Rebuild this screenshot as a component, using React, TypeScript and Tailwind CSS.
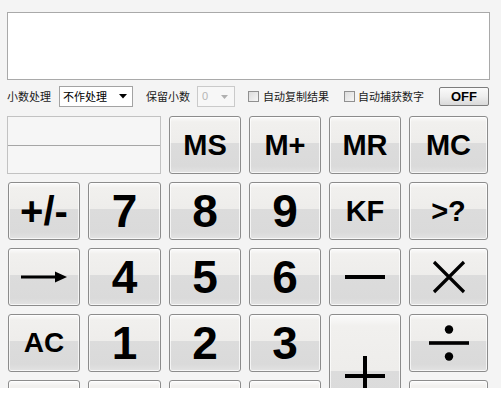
import React from "react";

const btnBase =
  "flex items-center justify-center rounded-[3px] border border-[#8c8c8c] bg-[linear-gradient(to_bottom,#fbfbfb_0%,#f1f0ee_9%,#eeedeb_46%,#dcdcdc_46%,#dadada_88%,#e3e3e3_100%)] shadow-[inset_0_0_0_1px_rgba(255,255,255,0.7)] text-black font-bold font-['Liberation_Sans',Arial,sans-serif] leading-none select-none";

function Btn({
  children,
  className = "",
}: {
  children?: React.ReactNode;
  className?: string;
}) {
  return <div className={`${btnBase} ${className}`}>{children}</div>;
}

const Arrow = () => (
  <svg width="46" height="12" viewBox="0 0 46 12">
    <rect x="0" y="4.5" width="36" height="3" fill="#000" />
    <polygon points="34,0.5 46,6 34,11.5" fill="#000" />
  </svg>
);

const Minus = () => (
  <svg width="40" height="6" viewBox="0 0 40 6">
    <rect x="0" y="1" width="40" height="4" fill="#000" />
  </svg>
);

const Times = () => (
  <svg width="34" height="34" viewBox="0 0 34 34">
    <path d="M2 2 L32 32 M32 2 L2 32" stroke="#000" strokeWidth="3.2" strokeLinecap="butt" />
  </svg>
);

const Divide = () => (
  <svg width="40" height="36" viewBox="0 0 40 36">
    <rect x="0" y="16.2" width="40" height="3.6" fill="#000" />
    <circle cx="20" cy="4.5" r="4.2" fill="#000" />
    <circle cx="20" cy="31.5" r="4.2" fill="#000" />
  </svg>
);

const Plus = () => (
  <svg width="40" height="40" viewBox="0 0 40 40">
    <rect x="0" y="18" width="40" height="4" fill="#000" />
    <rect x="18" y="0" width="4" height="40" fill="#000" />
  </svg>
);

export default function App() {
  const cjk =
    "font-['Noto_Sans_CJK_SC','Noto_Sans',sans-serif] text-[11px] text-[#1a1a1a]";
  return (
    <div className="w-[501px] h-[403px] bg-white">
      <div className="h-[388px] overflow-hidden bg-[#f4f4f4] pl-[7px] pr-[11px] pt-[12px]">
        {/* Display */}
        <div className="h-[68px] w-[483px] border border-[#a9a9a9] bg-white" />

        {/* Options row */}
        <div className="mt-[6px] flex h-[21px] items-center">
          <span className={cjk}>小数处理</span>
          <div className="ml-[8px] flex h-[21px] w-[74px] items-center justify-between border border-[#a3a3a3] bg-white pl-[3px] pr-[5px]">
            <span className={`${cjk} text-black`}>不作处理</span>
            <svg width="8" height="5" viewBox="0 0 8 5">
              <polygon points="0,0 8,0 4,4.5" fill="#000" />
            </svg>
          </div>
          <span className={`${cjk} ml-[13px]`}>保留小数</span>
          <div className="ml-[7px] flex h-[21px] w-[38px] items-center justify-between border border-[#cacaca] bg-[#f7f7f7] pl-[4px] pr-[6px]">
            <span className="font-['Liberation_Sans',Arial,sans-serif] text-[11px] text-[#b5b5b5]">
              0
            </span>
            <svg width="7" height="4" viewBox="0 0 7 4">
              <polygon points="0,0 7,0 3.5,4" fill="#b0b0b0" />
            </svg>
          </div>
          <div className="ml-[13px] h-[11px] w-[11px] border border-[#909090] bg-[linear-gradient(135deg,#dcdcdc,#f6f6f6)]" />
          <span className={`${cjk} ml-[4px]`}>自动复制结果</span>
          <div className="ml-[15px] h-[11px] w-[11px] border border-[#909090] bg-[linear-gradient(135deg,#dcdcdc,#f6f6f6)]" />
          <span className={`${cjk} ml-[3px]`}>自动捕获数字</span>
          <div className="ml-[15px] flex h-[19px] w-[50px] items-center justify-center rounded-[2px] border border-[#7d7d7d] bg-[linear-gradient(to_bottom,#fafafa,#eeeeee_50%,#d9d9d9)] font-['Liberation_Sans',Arial,sans-serif] text-[13px] font-bold text-black">
            OFF
          </div>
        </div>

        {/* Keypad */}
        <div className="ml-[1px] mt-[9px] grid grid-cols-[72px_73px_72px_72px_72px_79px] grid-rows-[58px_58px_58px_58px_58px] gap-x-[8px] gap-y-[8px]">
          <div className="col-span-2 -ml-[1px] flex h-[58px] flex-col border border-[#c2c2c2] bg-[#f6f6f6]">
            <div className="flex-1 border-b border-[#a6a6a6]" />
            <div className="flex-1" />
          </div>
          <Btn className="text-[29px]">MS</Btn>
          <Btn className="text-[29px]">M+</Btn>
          <Btn className="text-[29px]">MR</Btn>
          <Btn className="text-[29px]">MC</Btn>

          <Btn className="text-[40px]">+/-</Btn>
          <Btn className="text-[46px]">7</Btn>
          <Btn className="text-[46px]">8</Btn>
          <Btn className="text-[46px]">9</Btn>
          <Btn className="text-[29px]">KF</Btn>
          <Btn className="text-[29px]">&gt;?</Btn>

          <Btn>
            <Arrow />
          </Btn>
          <Btn className="text-[46px]">4</Btn>
          <Btn className="text-[46px]">5</Btn>
          <Btn className="text-[46px]">6</Btn>
          <Btn>
            <Minus />
          </Btn>
          <Btn>
            <Times />
          </Btn>

          <Btn className="text-[28px]">AC</Btn>
          <Btn className="text-[46px]">1</Btn>
          <Btn className="text-[46px]">2</Btn>
          <Btn className="text-[46px]">3</Btn>
          <Btn className="row-span-2">
            <Plus />
          </Btn>
          <Btn>
            <Divide />
          </Btn>

          <Btn />
          <Btn />
          <Btn />
          <Btn />
          <Btn />
        </div>
      </div>
    </div>
  );
}
